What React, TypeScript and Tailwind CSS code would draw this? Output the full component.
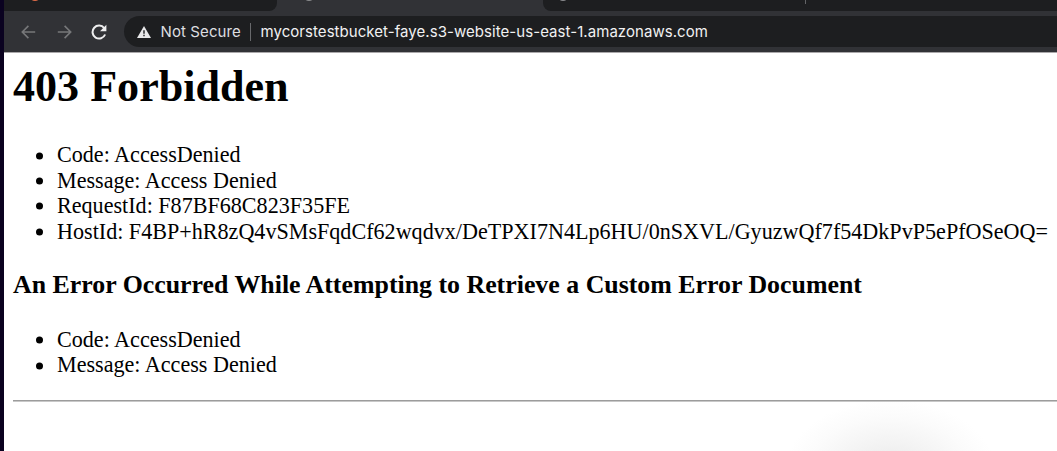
const ERROR_DETAILS = [
  "Code: AccessDenied",
  "Message: Access Denied",
  "RequestId: F87BF68C823F35FE",
  "HostId: F4BP+hR8zQ4vSMsFqdCf62wqdvx/DeTPXI7N4Lp6HU/0nSXVL/GyuzwQf7f54DkPvP5ePfOSeOQ=",
];

const DOCUMENT_DETAILS = ERROR_DETAILS.slice(0, 2);

function DetailList({ items }: { items: string[] }) {
  return (
    <ul className="text-[22.12px] leading-[25.4px]">
      {items.map((item) => (
        <li key={item} className="flex items-center whitespace-nowrap pl-[23px]">
          <span className="mr-[14px] size-[7px] shrink-0 translate-y-[0.5px] rounded-full bg-black" />
          <span>{item}</span>
        </li>
      ))}
    </ul>
  );
}

function TabStrip() {
  return (
    <div className="flex h-[11px] shrink-0">
      <div className="relative w-[273px] overflow-hidden rounded-br-[8px] bg-[#1d1e20]">
        <span className="absolute -top-[11px] left-[25px] size-[12px] rounded-full bg-[#e06c48]" />
      </div>
      <div className="relative w-[266px] overflow-hidden">
        <span className="absolute -top-[11px] left-[26px] size-[12px] rounded-full bg-[#8a8b8d]" />
      </div>
      <div className="relative grow overflow-hidden rounded-bl-[8px] bg-[#1d1e20]">
        <span className="absolute -top-[11px] left-[14px] size-[12px] rounded-full bg-[#8a8b8d]" />
        <span className="absolute left-[262px] top-0 h-[4px] w-px bg-[#636467]" />
      </div>
    </div>
  );
}

function Toolbar() {
  return (
    <div className="flex h-[41px] shrink-0 items-center">
      <svg className="ml-[17px] h-[14px] w-[15px] shrink-0" viewBox="0 0 15 14" fill="none" stroke="#77787a" strokeWidth="1.6">
        <path d="M14.2 7H1.4M7.4 .9L1.3 7l6.1 6.1" />
      </svg>
      <svg className="ml-[20.5px] h-[14px] w-[15px] shrink-0" viewBox="0 0 15 14" fill="none" stroke="#77787a" strokeWidth="1.6">
        <path d="M.8 7h12.8M7.6 .9L13.7 7l-6.1 6.1" />
      </svg>
      <svg className="ml-[19.5px] h-[16px] w-[16px] shrink-0" viewBox="0 0 16 16" fill="none">
        <path d="M13.2 4.1A6.5 6.5 0 1 0 14.1 10.5" stroke="#eeeeef" strokeWidth="2" />
        <path d="M15.4 .8V7.2H9z" fill="#eeeeef" />
      </svg>
      <div className="ml-[16.5px] flex h-[31px] grow items-center whitespace-nowrap rounded-l-full bg-[#1d1e20] font-['Inter','Liberation_Sans',sans-serif] text-[15px]">
        <svg className="ml-[13px] h-[12px] w-[14px] shrink-0" viewBox="0 0 14 12">
          <path d="M7 0L14 12H0z" fill="#e8e8e9" />
          <path d="M6.3 4.2h1.4v3.6H6.3zM6.3 8.8h1.4v1.4H6.3z" fill="#1d1e20" />
        </svg>
        <span className="ml-[10px] w-[80px] pt-px tracking-[0.1px] text-[#dddee0]">Not Secure</span>
        <span className="ml-[9px] h-[18px] w-px bg-[#68696c]" />
        <span className="ml-[10px] pt-px tracking-[0.055px] text-[#f1f1f2]">mycorstestbucket-faye.s3-website-us-east-1.amazonaws.com</span>
      </div>
    </div>
  );
}

export default function App() {
  return (
    <div className="flex h-[451px] w-[1057px] overflow-hidden bg-white">
      <div className="w-[4px] shrink-0 bg-[#0a0220]" />
      <div className="flex min-w-0 grow flex-col">
        <header className="flex h-[53px] shrink-0 flex-col border-b border-[#aaa8aa] bg-[#313236]">
          <TabStrip />
          <Toolbar />
        </header>
        <main className="relative grow overflow-hidden pl-[9px] font-['Liberation_Serif',serif] text-black">
          <div className="absolute left-[781px] top-[347px] h-[140px] w-[210px] bg-[radial-gradient(closest-side,#e9e9e9_0%,#f3f3f3_40%,#fbfbfb_75%,#ffffff_100%)]" />
          <div className="relative">
            <h1 className="h-[89.35px] whitespace-nowrap pt-[9px] text-[44.1px] font-bold leading-[50px]">403 Forbidden</h1>
            <DetailList items={ERROR_DETAILS} />
            <h3 className="h-[83px] whitespace-nowrap pt-[26px] text-[25.87px] font-bold leading-[30px]">
              An Error Occurred While Attempting to Retrieve a Custom Error Document
            </h3>
            <DetailList items={DOCUMENT_DETAILS} />
            <hr className="mt-[22.3px] h-[2px] border-0 border-b border-t border-b-[#c8c8c8] border-t-[#9c9c9c]" />
          </div>
        </main>
      </div>
    </div>
  );
}
